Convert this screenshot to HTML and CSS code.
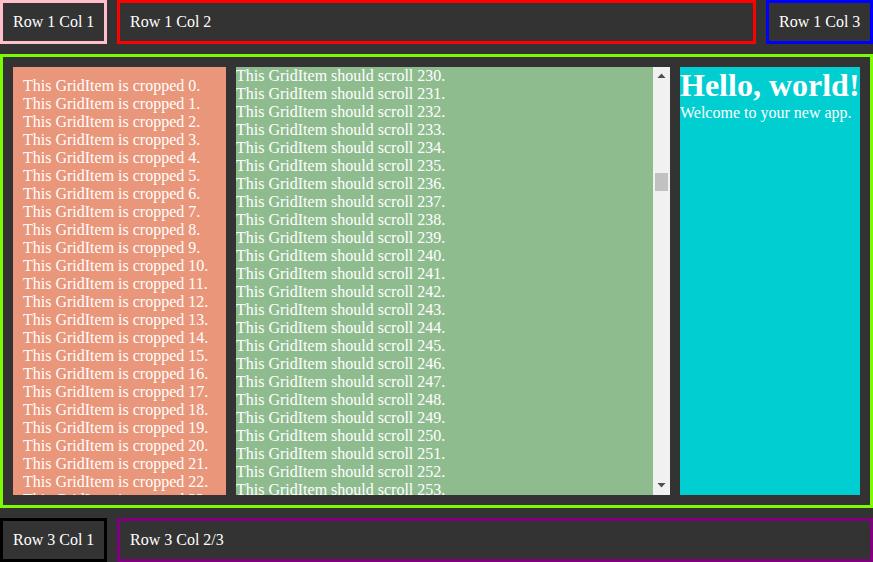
FILE: index.html
```html
<!DOCTYPE html>
<html>
<head>
<meta charset="utf-8">
<link rel="stylesheet" href="styles.css">
</head>
<body>
<div class="layout">
  <div class="cell cell-pink">Row 1 Col 1</div>
  <div class="cell cell-red">Row 1 Col 2</div>
  <div class="cell cell-blue">Row 1 Col 3</div>
  <div class="main">
    <div class="cropped" id="cropped"></div>
    <div class="scroll-pane">
      <div class="scroller" id="scroller"></div>
      <div class="scrollbar">
        <div class="sb-btn">
          <svg width="17" height="17" viewBox="0 0 17 17"><path d="M4.5 11h8l-4-4.5z" fill="#505050"/></svg>
        </div>
        <div class="sb-track"><div class="sb-thumb" id="thumb"></div></div>
        <div class="sb-btn">
          <svg width="17" height="17" viewBox="0 0 17 17"><path d="M4.5 5h8l-4 4.5z" fill="#505050"/></svg>
        </div>
      </div>
    </div>
    <div class="hello">
      <h1 class="hello-title">Hello, world!</h1>
      <p class="hello-text">Welcome to your new app.</p>
    </div>
  </div>
  <div class="cell cell-black">Row 3 Col 1</div>
  <div class="cell cell-purple">Row 3 Col 2/3</div>
</div>
<script src="script.js"></script>
</body>
</html>
```
FILE: styles.css
```css
html, body {
  margin: 0;
  padding: 0;
  height: 100%;
  background: #333333;
}
body {
  font-family: "Liberation Serif", "Times New Roman", serif;
  font-size: 16px;
  line-height: 18px;
  color: #ffffff;
  overflow: hidden;
}
.layout {
  display: grid;
  grid-template-columns: 107px 1fr 107px;
  grid-template-rows: auto 1fr auto;
  gap: 10px;
  height: 562px;
}
.cell {
  border: 3px solid;
  padding: 10px;
  white-space: nowrap;
}
.cell-pink { border-color: #ffc0cb; }
.cell-red { border-color: #ff0000; }
.cell-blue { border-color: #0000ff; }
.cell-black { border-color: #000000; }
.cell-purple { border-color: #800080; grid-column: 2 / 4; }
.main {
  grid-column: 1 / 4;
  border: 3px solid #7cfc00;
  padding: 10px;
  display: grid;
  grid-template-columns: 213px 1fr 180px;
  gap: 10px;
  min-height: 0;
}
.cropped {
  background: #e9967a;
  padding: 10px;
  overflow: hidden;
  min-height: 0;
}
.scroll-pane {
  display: flex;
  min-height: 0;
  overflow: hidden;
}
.scroller {
  flex: 1;
  background: #8fbc8f;
  overflow: hidden;
  min-width: 0;
}
.scrollbar {
  width: 17px;
  flex: none;
  background: #f1f1f1;
  display: flex;
  flex-direction: column;
}
.sb-btn {
  height: 17px;
  flex: none;
}
.sb-btn svg {
  display: block;
}
.sb-track {
  flex: 1;
  min-height: 0;
}
.sb-thumb {
  height: 18px;
  margin: 0 2px;
  background: #c1c1c1;
}
.line {
  white-space: nowrap;
}
.hello {
  background: #00ced1;
  overflow: hidden;
  min-height: 0;
}
.hello-title {
  margin: 0;
  font-size: 32px;
  line-height: 37px;
  font-weight: bold;
  white-space: nowrap;
}
.hello-text {
  margin: 0;
}
```
FILE: script.js
```js
var cropped = document.getElementById('cropped');
for (var i = 0; i < 40; i++) {
  var d = document.createElement('div');
  d.className = 'line';
  d.textContent = 'This GridItem is cropped ' + i + '.';
  cropped.appendChild(d);
}
var scroller = document.getElementById('scroller');
for (var j = 0; j < 1000; j++) {
  var s = document.createElement('div');
  s.className = 'line';
  s.textContent = 'This GridItem should scroll ' + j + '.';
  scroller.appendChild(s);
}
scroller.scrollTop = 230 * 18;
var thumb = document.getElementById('thumb');
var track = thumb.parentNode;
var maxScroll = scroller.scrollHeight - scroller.clientHeight;
var room = track.clientHeight - thumb.offsetHeight;
thumb.style.marginTop = Math.round(scroller.scrollTop / maxScroll * room) + 'px';
```
